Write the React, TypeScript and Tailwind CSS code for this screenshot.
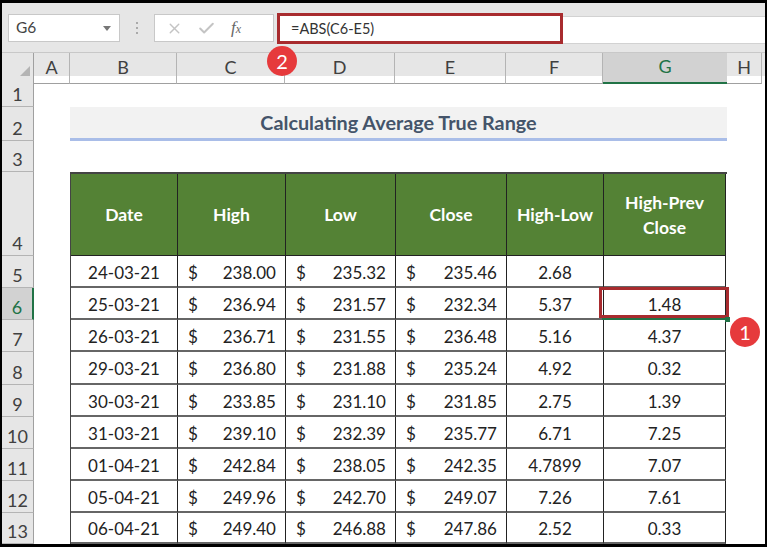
import React from 'react';
import { Check, X } from 'lucide-react';

const rows = [
  ['24-03-21', '238.00', '235.32', '235.46', '2.68', ''],
  ['25-03-21', '236.94', '231.57', '232.34', '5.37', '1.48'],
  ['26-03-21', '236.71', '231.55', '236.48', '5.16', '4.37'],
  ['29-03-21', '236.80', '231.88', '235.24', '4.92', '0.32'],
  ['30-03-21', '233.85', '231.10', '231.85', '2.75', '1.39'],
  ['31-03-21', '239.10', '232.39', '235.77', '6.71', '7.25'],
  ['01-04-21', '242.84', '238.05', '242.35', '4.7899', '7.07'],
  ['05-04-21', '249.96', '242.70', '249.07', '7.26', '7.61'],
  ['06-04-21', '249.40', '246.88', '247.86', '2.52', '0.33'],
];

const columns = ['A', 'B', 'C', 'D', 'E', 'F', 'G', 'H'];
const rowLabels = [1, 2, 3, 4, 5, 6, 7, 8, 9, 10, 11, 12, 13];
const rowHeights = 'grid-rows-[31px_34px_31px_84px_32px_32px_32px_33px_32px_32px_32px_32px_31px]';
const sheetCols = 'grid-cols-[32px_36px_107px_108px_110px_111px_97px_124px_35px]';

const RowHeader: React.FC<{ label: number }> = ({ label }) => (
  <div
    style={{ gridColumn: 1, gridRow: label }}
    className={`flex items-end justify-center border-b border-[#b4b4b4] pb-[3px] text-[18px] leading-none ${
      label === 6
        ? 'border-r-2 border-r-[#217346] bg-[#d2d2d2] text-[#217346]'
        : 'border-r border-r-[#a0a0a0] bg-[#e6e6e6] text-[#404040]'
    }`}
  >
    {label}
  </div>
);

const Money: React.FC<{ value: string }> = ({ value }) => (
  <div className="flex h-full items-center justify-between border-r border-b-2 border-r-[#222] border-b-[#666] pt-[3px] pr-[9px] pl-[10px] text-[17px] text-[#222]">
    <span>$</span>
    <span>{value}</span>
  </div>
);

const Plain: React.FC<{ value: string }> = ({ value }) => (
  <div className="flex h-full items-center justify-center border-r border-b-2 border-r-[#222] border-b-[#666] pt-[3px] text-[17px] text-[#222]">
    {value}
  </div>
);

const Badge: React.FC<{ n: number; className: string }> = ({ n, className }) => (
  <div
    className={`absolute flex h-[30px] w-[30px] items-center justify-center rounded-full bg-[#e63a3c] text-[20px] text-white ${className}`}
  >
    {n}
  </div>
);

export default function App() {
  return (
    <div
      className="relative flex h-[547px] w-[767px] flex-col overflow-hidden border-t-[3px] border-r-2 border-b-[3px] border-l-2 border-black bg-white"
      style={{ fontFamily: 'Lato, "Open Sans", sans-serif' }}
    >
      {/* Formula bar */}
      <div className="flex h-[50px] shrink-0 items-start border-b border-[#c8c8c8] bg-[#e6e6e6] pt-[10px] pl-[6px]">
        <div className="mt-[1px] flex h-[28px] w-[112px] items-center justify-between border border-[#c8c8c8] bg-white pr-2 pl-[7px] text-[15.5px] text-[#444]">
          <span>G6</span>
          <span className="h-0 w-0 border-x-[4px] border-t-[5px] border-x-transparent border-t-[#777]" />
        </div>
        <div className="mt-[8px] flex w-[34px] flex-col items-center gap-[3px] pt-[1px]">
          <span className="h-[2px] w-[2px] bg-[#aaa]" />
          <span className="h-[2px] w-[2px] bg-[#aaa]" />
          <span className="h-[2px] w-[2px] bg-[#aaa]" />
        </div>
        <div className="mt-[1px] flex h-[28px] w-[120px] items-center border border-[#c8c8c8] bg-white pl-[11px]">
          <X size={17} strokeWidth={2} className="text-[#c4c4c4]" />
          <Check size={19} strokeWidth={2.5} className="ml-[14px] text-[#c4c4c4]" />
          <span className="ml-[15px] font-['Liberation_Serif',serif] text-[17px] text-[#666] italic">
            f<span className="text-[12px]">x</span>
          </span>
        </div>
        <div className="ml-[3px] flex h-[31px] w-[286px] items-center border-[3px] border-[#a82b2e] bg-white pl-[11px] text-[14.5px] text-[#333]">
          =ABS(C6-E5)
        </div>
        <div className="mt-[3px] h-[28px] flex-1 border-y border-[#d2d2d2] bg-white" />
      </div>

      {/* Column letters */}
      <div className={`grid h-[23px] shrink-0 ${sheetCols} bg-[#e6e6e6]`}>
        <div className="flex items-end justify-end border-r border-[#a0a0a0] pr-[3px] pb-[3px]">
          <svg width="15" height="15" viewBox="0 0 15 15">
            <path d="M15 0V15H0Z" fill="#b4b4b4" />
          </svg>
        </div>
        {columns.map(col => (
          <div
            key={col}
            className={`flex items-center justify-center pb-[2px] text-[18px] ${
              col === 'G'
                ? 'border-b-2 border-[#217346] bg-[#d2d2d2] text-[#217346]'
                : 'border-r border-b border-r-[#b4b4b4] border-b-[#a0a0a0] text-[#404040]'
            }`}
          >
            {col}
          </div>
        ))}
      </div>

      {/* Sheet */}
      <div className={`grid flex-1 ${sheetCols} ${rowHeights}`}>
        {rowLabels.map(label => (
          <RowHeader key={label} label={label} />
        ))}

        <div className="col-start-3 col-end-9 row-start-2 flex items-center justify-center border-b-[3px] border-[#a9bde8] bg-[#f2f2f2] text-[19.8px] font-bold text-[#44546a]">
          Calculating Average True Range
        </div>

        <div className="col-start-3 col-end-9 row-start-4 row-end-14 grid grid-cols-[107px_108px_110px_111px_97px_122px] grid-rows-subgrid border-t-2 border-l border-t-[#444] border-l-[#444]">
          {['Date', 'High', 'Low', 'Close', 'High-Low', 'High-Prev Close'].map(title => (
            <div
              key={title}
              className="flex items-center justify-center border-r border-b border-[#222] bg-[#548235] text-center text-[17.5px] leading-[25px] font-bold text-white"
            >
              {title === 'High-Prev Close' ? (
                <span>
                  High-Prev
                  <br />
                  Close
                </span>
              ) : (
                title
              )}
            </div>
          ))}
          {rows.map(row =>
            row.map((value, i) =>
              i >= 1 && i <= 3 ? (
                <Money key={row[0] + i} value={value} />
              ) : (
                <Plain key={row[0] + i} value={value} />
              ),
            ),
          )}
        </div>
      </div>

      {/* Overlays: selected cell outline and numbered callouts */}
      <div className="absolute top-[284px] left-[597px] h-[31px] w-[130px] border-[3px] border-[#a82b2e]" />
      <div className="absolute top-[315px] left-[600px] h-[2px] w-[123px] bg-[#217346]" />
      <div className="absolute top-[314px] left-[723px] h-[5px] w-[5px] bg-[#217346]" />
      <Badge n={1} className="top-[314px] left-[728px]" />
      <Badge n={2} className="top-[43px] left-[265px]" />
    </div>
  );
}
